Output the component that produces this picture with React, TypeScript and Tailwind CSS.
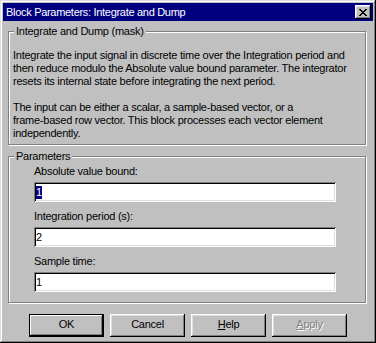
const raised =
  "shadow-[inset_-1px_-1px_0_#000,inset_1px_1px_0_#fff,inset_-2px_-2px_0_#808080,inset_2px_2px_0_#dfdfdf]";

function GroupBox({ title, className, children }: { title: string; className: string; children: React.ReactNode }) {
  return (
    <div className={`border border-[#808080] shadow-[1px_1px_0_#fff,inset_1px_1px_0_#fff] ${className}`}>
      <div className="-mt-[7px] ml-[5px] w-fit bg-[#c0c0c0] px-[2px] leading-[13px]">{title}</div>
      {children}
    </div>
  );
}

function Field({ label, value, selected }: { label: string; value: string; selected?: boolean }) {
  return (
    <div className="flex flex-col">
      <div className="ml-[25px] h-[16px] leading-[16px]">{label}</div>
      <div className="ml-[25px] mt-[3px] flex h-[20px] w-[302px] items-center bg-white px-[2px] shadow-[inset_1px_1px_0_#808080,inset_-1px_-1px_0_#fff,inset_2px_2px_0_#000,inset_-2px_-2px_0_#dfdfdf]">
        <span className={selected ? "bg-[#000080] text-white leading-[13px]" : "leading-[13px]"}>{value}</span>
      </div>
    </div>
  );
}

function Button({ children, isDefault, disabled }: { children: React.ReactNode; isDefault?: boolean; disabled?: boolean }) {
  return (
    <div
      className={`flex h-[23px] w-[75px] items-center justify-center bg-[#c0c0c0] pb-[2px] ${
        isDefault
          ? "border border-black shadow-[inset_-1px_-1px_0_#000,inset_1px_1px_0_#fff,inset_-2px_-2px_0_#808080]"
          : raised
      } ${disabled ? "text-[#808080] [text-shadow:1px_1px_0_#fff]" : "text-black"}`}
    >
      {children}
    </div>
  );
}

export default function App() {
  const lines1 = [
    "Integrate the input signal in discrete time over the Integration period and",
    "then reduce modulo the Absolute value bound parameter. The integrator",
    "resets its internal state before integrating the next period.",
  ];
  const lines2 = [
    "The input can be either a scalar, a sample-based vector, or a",
    "frame-based row vector.  This block processes each vector element",
    "independently.",
  ];

  return (
    <div className="h-[343px] w-[376px] bg-[#c0c0c0] p-[3px] font-['Liberation_Sans',Arial,sans-serif] text-[11px] tracking-[-0.25px] text-black shadow-[inset_-1px_-1px_0_#000,inset_1px_1px_0_#dfdfdf,inset_-2px_-2px_0_#808080,inset_2px_2px_0_#fff]">
      {/* title bar */}
      <div className="flex h-[18px] items-center justify-between bg-[#000080] pl-[3px] pr-[2px]">
        <span className="text-[11px] leading-[18px] tracking-[-0.3px] text-white">Block Parameters: Integrate and Dump</span>
        <div className={`flex h-[14px] w-[16px] items-center justify-center ${raised} bg-[#c0c0c0]`}>
          <svg width="8" height="7" viewBox="0 0 8 7">
            <path d="M0 0h2v1h1v1h2V1h1V0h2v1H7v1H6v1H5v1h1v1h1v1h1v1H6V6H5V5H3v1H2v1H0V6h1V5h1V4h1V3H2V2H1V1H0z" fill="#000" />
          </svg>
        </div>
      </div>

      <GroupBox title="Integrate and Dump (mask)" className="ml-[5px] mt-[10px] h-[114px] w-[358px]">
        <div className="mt-[11px] pl-[4px] leading-[13px] whitespace-nowrap">
          {lines1.map((l) => (
            <div key={l}>{l}</div>
          ))}
          <div className="h-[13px]" />
          {lines2.map((l) => (
            <div key={l}>{l}</div>
          ))}
        </div>
      </GroupBox>

      <GroupBox title="Parameters" className="ml-[5px] mt-[11px] h-[147px] w-[358px]">
        <div className="flex flex-col">
          <Field label="Absolute value bound:" value="1" selected />
          <div className="mt-[6px]">
            <Field label="Integration period (s):" value="2" />
          </div>
          <div className="mt-[6px]">
            <Field label="Sample time:" value="1" />
          </div>
        </div>
      </GroupBox>

      <div className="ml-[26px] mt-[11px] flex gap-[6px]">
        <Button isDefault>OK</Button>
        <Button>Cancel</Button>
        <Button>
          <span>
            <span className="underline">H</span>elp
          </span>
        </Button>
        <Button disabled>
          <span>
            <span className="underline">A</span>pply
          </span>
        </Button>
      </div>
    </div>
  );
}
